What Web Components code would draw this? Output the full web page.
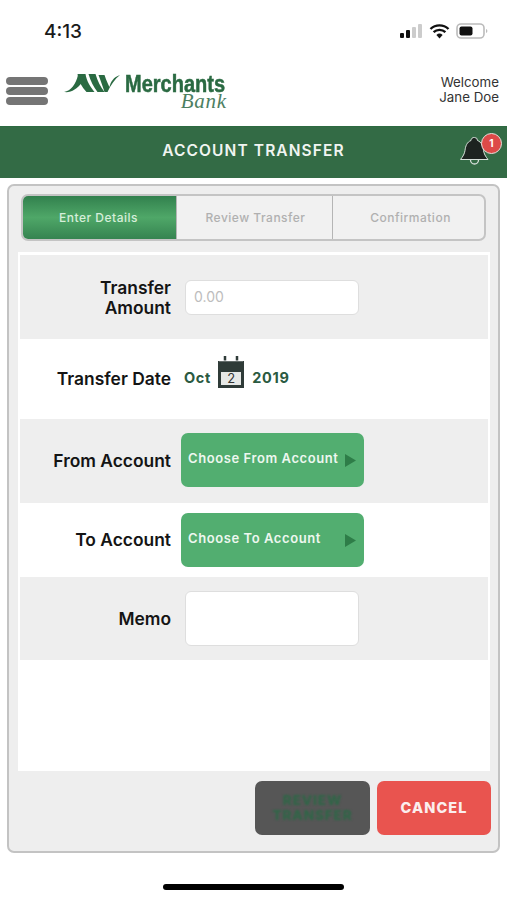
<!DOCTYPE html>
<html lang="en">
<head>
<meta charset="utf-8">
<title>Account Transfer</title>
<style>
  html, body { margin: 0; padding: 0; background: #fff; }
  body { width: 507px; height: 900px; overflow: hidden; font-family: "Inter", "Liberation Sans", sans-serif; }
</style>
</head>
<body>
<transfer-app></transfer-app>

<template id="status-bar-tpl">
<style>
  :host { display: flex; height: 60px; align-items: center; justify-content: space-between; padding: 0 19px 0 44px; box-sizing: border-box; }
  .time { font: 500 19px/1 "Inter", sans-serif; color: #1a1a1a; margin-top: 2px; }
  .icons { display: flex; align-items: center; gap: 6px; margin-top: 2px; }
  svg { display: block; }
</style>
<span class="time">4:13</span>
<div class="icons">
  <svg width="23" height="14" viewBox="0 0 23 14"><rect x="0" y="9" width="4" height="5" rx="1" fill="#111"/><rect x="6" y="6" width="4" height="8" rx="1" fill="#111"/><rect x="12" y="3" width="4" height="11" rx="1" fill="#ccc"/><rect x="18" y="0" width="4" height="14" rx="1" fill="#ccc"/></svg>
  <svg width="21" height="15" viewBox="0 0 21 15"><path d="M1.5 5a13 13 0 0 1 18 0M4.6 8.2a8.6 8.6 0 0 1 11.8 0" fill="none" stroke="#111" stroke-width="2.4"/><path d="M7.4 11a4.5 4.5 0 0 1 6.2 0l-3.1 3.4z" fill="#111"/></svg>
  <svg width="32" height="16" viewBox="0 0 32 16"><rect x="1" y="1" width="27" height="14" rx="4" fill="none" stroke="#bbb" stroke-width="1.6"/><rect x="3.5" y="3.5" width="13" height="9" rx="2" fill="#111"/><path d="M30 6v4a2 2 0 0 0 1.4-2A2 2 0 0 0 30 6z" fill="#bbb"/></svg>
</div>
</template>

<template id="app-header-tpl">
<style>
  :host { display: flex; height: 66px; align-items: center; box-sizing: border-box; padding: 0 8px 0 6px; background: #fff; }
  .menu { display: flex; flex-direction: column; gap: 2px; width: 42px; margin-bottom: 5px; flex: none; }
  .menu i { display: block; height: 8px; border-radius: 4px; background: #757575; }
  .logo { display: flex; align-items: flex-start; margin-left: 16px; width: 165px; height: 42px; margin-top: 3px; }
  .logo svg { flex: none; }
  .names { display: flex; flex-direction: column; margin-left: 5px; width: 102px; color: #2a6a42; }
  .merchants { font: 700 23px/20px "Liberation Sans", sans-serif; transform: scaleX(.87); transform-origin: left top; white-space: nowrap; -webkit-text-stroke: .5px #2a6a42; }
  .bank { font: italic 400 21px/16px "Liberation Serif", serif; color: #4d7f62; align-self: flex-end; margin-top: -1px; letter-spacing: .8px; }
  .welcome { margin-left: auto; text-align: right; font: 400 13.3px/15px "Inter", sans-serif; color: #333; margin-bottom: 7px; }
</style>
<div class="menu"><i></i><i></i><i></i></div>
<div class="logo">
  <svg width="56" height="19" viewBox="0 0 56 19"><g fill="#2a6a42">
    <path d="M0 18C7 17 12 10 14 1l3.500 8C13 15 7 19 0 18z"/>
    <path d="M13.500 0h8c1 7 5 13 9 18h-8C17.500 13 14.500 7 13.500 0z"/>
    <path d="M24.500 0h7c2 7 5 13 9 18h-7C29.500 13 26.500 7 24.500 0z"/>
    <path d="M34.500 1h6c2 6 4 10 5 12 1-5 4-10 10.500-12-5 4-9.500 10-12.500 17h-3C38.500 12 36.500 6 34.500 1z"/>
  </g></svg>
  <div class="names"><span class="merchants">Merchants</span><span class="bank">Bank</span></div>
</div>
<div class="welcome">Welcome<br>Jane Doe</div>
</template>

<template id="title-bar-tpl">
<style>
  :host { display: flex; position: relative; height: 52px; padding-bottom: 3px; align-items: center; justify-content: center; background: #336b45; border-top: 1px solid #2d6a41; box-sizing: border-box; }
  .title { font: 600 15.5px/1 "Inter", sans-serif; letter-spacing: 1.1px; color: #f1f5f1; }
  .bell { position: absolute; left: 460px; top: 9px; display: block; }
  .badge { position: absolute; left: 481px; top: 6px; width: 21px; height: 21px; border-radius: 50%; background: #dd4a48; border: 1px solid #e9e0dc; box-sizing: border-box; color: #fff; font: 700 10px/19px "Inter", sans-serif; text-align: center; }
</style>
<span class="title"><slot></slot></span>
<svg class="bell" width="29" height="31" viewBox="0 0 29 31"><path d="M14.500 1.500a3 3 0 0 1 3 3c4 1.500 5.500 5.500 6 10 .4 3 2 6 4.500 9H.5c2.500-3 4.100-6 4.500-9 .5-4.500 2-8.500 6-10a3 3 0 0 1 3.500-3z" fill="#1d2320" stroke="#d7e0da" stroke-width="1"/><path d="M10.500 24a4 4 0 0 0 8 0" fill="none" stroke="#d7e0da" stroke-width="1.300"/></svg>
<span class="badge">1</span>
</template>

<template id="step-tabs-tpl">
<style>
  :host { display: flex; height: 47px; margin: 0 12px; box-sizing: border-box; border: 2px solid #c4c4c4; border-radius: 7px; background: #f1f1f1; overflow: hidden; }
  span { flex: 1 1 0; display: flex; align-items: center; justify-content: center; font: 500 12px/1 "Inter", sans-serif; letter-spacing: .5px; color: #b0b0b0; box-sizing: border-box; }
  span + span { border-left: 1px solid #b5b5b5; }
  .on { flex: none; width: 155px; margin: -2px 0 -2px -2px; color: #d6eeda; background: linear-gradient(#2f7d4b 0%, #4fa768 50%, #33804e 100%); }
  .mid { flex: none; width: 156px; padding-left: 2px; }
  .last { padding-left: 4px; }
</style>
<span class="on">Enter Details</span><span class="mid">Review Transfer</span><span class="last">Confirmation</span>
</template>

<template id="form-row-tpl">
<style>
  :host { display: flex; align-items: center; box-sizing: border-box; background: #fff; }
  :host([shade]) { background: #eeeeee; }
  .label { flex: none; width: 151px; text-align: right; font: 600 17.4px/20px "Inter", sans-serif; color: #141414; }
  .field { margin-left: 10px; display: flex; align-items: center; }
</style>
<div class="label"><slot name="label"></slot></div>
<div class="field"><slot></slot></div>
</template>

<template id="text-box-tpl">
<style>
  :host { display: flex; align-items: center; box-sizing: border-box; width: 174px; margin-left: 4px; padding-left: 8px; background: #fff; border: 1px solid #dedede; border-radius: 6px; font: 400 14px/1 "Inter", sans-serif; color: #bdbdbd; }
</style>
<slot></slot>
</template>

<template id="date-pick-tpl">
<style>
  :host { display: flex; align-items: center; font: 700 14.5px/1 "Inter", sans-serif; letter-spacing: .7px; color: #2a5a41; margin: -2px 0 0 3px; }
  .cal { position: relative; width: 26px; height: 32px; margin: -12px 8px 0 7px; }
  .day { position: absolute; left: 0; right: 0; bottom: 3px; font: 400 13px/1 "Inter", sans-serif; letter-spacing: 0; color: #333; text-align: center; }
  .cal svg { display: block; }
</style>
<span>Oct</span>
<div class="cal">
  <svg width="26" height="32" viewBox="0 0 26 32"><rect x="0" y="5" width="26" height="27" fill="#2f3b38"/><rect x="3" y="16" width="20" height="13" fill="#e6e8e6"/><path d="M7 0v7M19 0v7" stroke="#2f3b38" stroke-width="2.500" stroke-linecap="round"/><rect x="1" y="4" width="24" height="1.500" fill="#fff" opacity=".5"/></svg>
  <span class="day">2</span>
</div>
<span>2019</span>
</template>

<template id="pick-button-tpl">
<style>
  :host { display: flex; align-items: center; box-sizing: border-box; width: 183px; height: 54px; padding: 0 8px 3px 7px; background: #52ae70; border-radius: 7px; color: #edf7ef; font: 600 13px/1 "Inter", sans-serif; letter-spacing: .58px; white-space: nowrap; }
  svg { margin-left: auto; margin-top: 3px; flex: none; display: block; }
</style>
<slot></slot>
<svg width="11" height="13" viewBox="0 0 11 13"><path d="M0 0l11 6.500-11 6.500z" fill="#2e7d48"/></svg>
</template>

<template id="action-button-tpl">
<style>
  :host { display: flex; align-items: center; justify-content: center; height: 54px; box-sizing: border-box; border-radius: 7px; background: #e9544f; color: #fbeeee; font: 800 14.5px/1 "Inter", sans-serif; letter-spacing: 1.1px; width: 114px; }
  :host([disabled]) { width: 115px; background: #565656; }
</style>
<slot></slot>
</template>

<template id="transfer-app-tpl">
<style>
  :host { display: flex; flex-direction: column; height: 900px; box-sizing: border-box; }
  .panel { margin: 6px 7px 0 7px; height: 669px; box-sizing: border-box; border: 2px solid #c3c3c3; border-radius: 7px; background: #eeeeee; padding: 8px 0 0 0; display: flex; flex-direction: column; }
  .form { margin: 11px 8px 0 9px; height: 519px; box-sizing: border-box; padding: 3px 2px 0 2px; background: #fff; display: flex; flex-direction: column; }
  .actions { display: flex; justify-content: flex-end; gap: 7px; padding: 10px 7px 0 0; }
  .home { width: 181px; height: 6px; border-radius: 3px; background: #000; margin: 31px auto 0; }
  .two-line { display: block; margin-top: 2px; }
  .dim { color: #2f6647; font-size: 13.5px; line-height: 15px; text-align: center; letter-spacing: .9px; filter: blur(1px); }
</style>
<status-bar></status-bar>
<app-header></app-header>
<title-bar>ACCOUNT TRANSFER</title-bar>
<div class="panel">
  <step-tabs></step-tabs>
  <div class="form">
    <form-row shade style="height:84px"><span slot="label" class="two-line">Transfer<br>Amount</span><text-box style="height:35px">0.00</text-box></form-row>
    <form-row style="height:80px"><span slot="label">Transfer Date</span><date-pick></date-pick></form-row>
    <form-row shade style="height:84px"><span slot="label">From Account</span><pick-button style="margin-bottom:2px">Choose From Account</pick-button></form-row>
    <form-row style="height:74px"><span slot="label">To Account</span><pick-button>Choose To Account</pick-button></form-row>
    <form-row shade style="height:83px"><span slot="label">Memo</span><text-box style="height:55px"></text-box></form-row>
  </div>
  <div class="actions">
    <action-button disabled><span class="dim">REVIEW<br>TRANSFER</span></action-button>
    <action-button>CANCEL</action-button>
  </div>
</div>
<div class="home"></div>
</template>

<script>
  // every element is the same thing: clone its template into an open shadow root
  const names = ['status-bar', 'app-header', 'title-bar', 'step-tabs', 'form-row', 'text-box',
    'date-pick', 'pick-button', 'action-button', 'transfer-app'];

  for (const name of names) {
    customElements.define(name, class extends HTMLElement {
      constructor() {
        super();
        this.attachShadow({ mode: 'open' });
        const template = document.getElementById(name + '-tpl');
        this.shadowRoot.appendChild(template.content.cloneNode(true));
      }
    });
  }
</script>
</body>
</html>
